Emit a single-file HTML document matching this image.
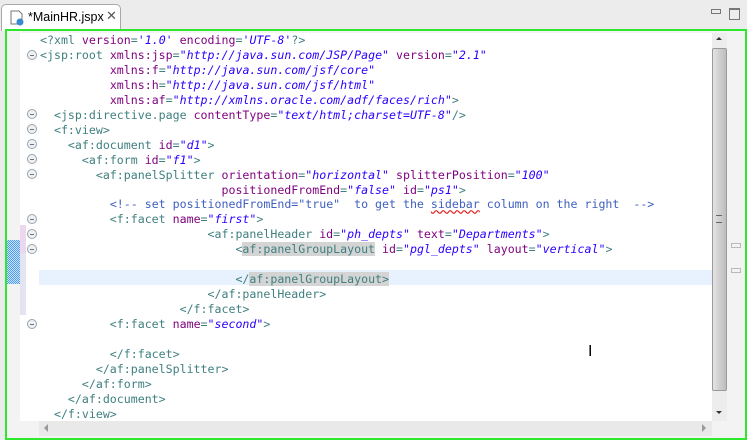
<!DOCTYPE html><html><head><meta charset="utf-8"><style>
body{margin:0;width:747px;height:440px;background:#ececec;position:relative;overflow:hidden;font-family:"Liberation Sans",sans-serif}
.tab{position:absolute;left:1px;top:4px;width:118px;height:26px;background:#fff;border:1px solid #a8a8a8;border-bottom:none;border-radius:5px 5px 0 0}
.frame{position:absolute;left:5px;top:29px;width:738px;height:407px;border:2px solid #2ee82e;background:#f3f3f3}
.code{position:absolute;left:39px;top:33px;width:673px;height:388px;background:#fff}
.margin{position:absolute;left:20px;top:33px;width:19px;height:388px;background:#fff}
pre{position:absolute;left:40px;top:33px;margin:0;font-family:"DejaVu Sans Mono",monospace;font-size:11.6px;line-height:14.95px;color:#3f7f7f}
.a{color:#7f007f}.v{color:#2a00ff;font-style:italic}.c{color:#3f5fbf}.h{background:#d4d4d4}
.fold{position:absolute;left:27px;width:8px;height:8px;border:1px solid #9aa3ad;border-radius:50%;background:#eef1f4}
.fold:after{content:"";position:absolute;left:2px;top:3.5px;width:4px;height:1px;background:#6a7480}
</style></head><body>
<div class="tab"><svg style="position:absolute;left:8px;top:5px" width="15" height="16"><path d="M1 1h8l3 3v10H1z" fill="#fff" stroke="#777"/><circle cx="10" cy="12" r="3.5" fill="#3a8ad0"/></svg><span style="position:absolute;left:26px;top:5px;font-size:12.5px;color:#000">*MainHR.jspx</span><span style="position:absolute;left:104px;top:3px;font-size:13px;color:#555">✕</span></div>
<div style="position:absolute;left:711px;top:9px;width:8px;height:3px;border:1px solid #777"></div>
<div style="position:absolute;left:729px;top:8px;width:9px;height:9px;border:1px solid #777;border-top-width:2px"></div>
<div class="frame"></div>
<div class="margin"></div>
<div style="position:absolute;left:7px;top:240px;width:13px;height:44px;background:repeating-conic-gradient(#4a9cf0 0 25%,#cfe4fb 0 50%) 0 0/2px 2px"></div>
<div style="position:absolute;left:20px;top:225px;width:6px;height:28px;background:#ecd8ee"></div>
<div style="position:absolute;left:20px;top:253px;width:6px;height:62px;background:#e4e4f0"></div>
<div class="code"></div>
<div style="position:absolute;left:39px;top:270px;width:673px;height:15px;background:#e8f2fe"></div>
<div class="fold" style="top:50px"></div><div class="fold" style="top:109px"></div><div class="fold" style="top:124px"></div><div class="fold" style="top:139px"></div><div class="fold" style="top:154px"></div><div class="fold" style="top:169px"></div><div class="fold" style="top:214px"></div><div class="fold" style="top:229px"></div><div class="fold" style="top:244px"></div><div class="fold" style="top:319px"></div>
<pre>&lt;?xml <span class="a">version</span>=<span class="v">'1.0'</span> <span class="a">encoding</span>=<span class="v">'UTF-8'</span>?&gt;
&lt;jsp:root <span class="a">xmlns:jsp</span>=<span class="v">"http://java.sun.com/JSP/Page"</span> <span class="a">version</span>=<span class="v">"2.1"</span>
          <span class="a">xmlns:f</span>=<span class="v">"http://java.sun.com/jsf/core"</span>
          <span class="a">xmlns:h</span>=<span class="v">"http://java.sun.com/jsf/html"</span>
          <span class="a">xmlns:af</span>=<span class="v">"http://xmlns.oracle.com/adf/faces/rich"</span>&gt;
  &lt;jsp:directive.page <span class="a">contentType</span>=<span class="v">"text/html;charset=UTF-8"</span>/&gt;
  &lt;f:view&gt;
    &lt;af:document <span class="a">id</span>=<span class="v">"d1"</span>&gt;
      &lt;af:form <span class="a">id</span>=<span class="v">"f1"</span>&gt;
        &lt;af:panelSplitter <span class="a">orientation</span>=<span class="v">"horizontal"</span> <span class="a">splitterPosition</span>=<span class="v">"100"</span>
                          <span class="a">positionedFromEnd</span>=<span class="v">"false"</span> <span class="a">id</span>=<span class="v">"ps1"</span>&gt;
          <span class="c">&lt;!-- set positionedFromEnd="true"  to get the <u style="text-decoration-color:#e02020;text-decoration-style:wavy">sidebar</u> column on the right  --&gt;</span>
          &lt;f:facet <span class="a">name</span>=<span class="v">"first"</span>&gt;
                        &lt;af:panelHeader <span class="a">id</span>=<span class="v">"ph_depts"</span> <span class="a">text</span>=<span class="v">"Departments"</span>&gt;
                            &lt;<span class="h">af:panelGroupLayout</span> <span class="a">id</span>=<span class="v">"pgl_depts"</span> <span class="a">layout</span>=<span class="v">"vertical"</span>&gt;

                            &lt;/<span class="h">af:panelGroupLayout</span><span class="h">&gt;</span>
                        &lt;/af:panelHeader&gt;
                    &lt;/f:facet&gt;
          &lt;f:facet <span class="a">name</span>=<span class="v">"second"</span>&gt;

          &lt;/f:facet&gt;
        &lt;/af:panelSplitter&gt;
      &lt;/af:form&gt;
    &lt;/af:document&gt;
  &lt;/f:view&gt;</pre>
<div style="position:absolute;left:39px;top:421px;width:673px;height:15px;background:#e9e9e9"></div>
<div style="position:absolute;left:44px;top:424px;width:0;height:0;border:4px solid transparent;border-right-color:#999;border-left:none"></div>
<div style="position:absolute;left:702px;top:424px;width:0;height:0;border:4px solid transparent;border-left-color:#999;border-right:none"></div>
<div style="position:absolute;left:712px;top:33px;width:15px;height:388px;background:#ededed"></div>
<div style="position:absolute;left:716px;top:37px;border:3px solid transparent;border-bottom:3px solid #333;border-top:none"></div>
<div style="position:absolute;left:716px;top:411px;border:3px solid transparent;border-top:3px solid #333;border-bottom:none"></div>
<div style="position:absolute;left:712px;top:48px;width:13px;height:341px;border:1px solid #9a9a9a;border-radius:2px;background:linear-gradient(90deg,#e4e4e4,#cfcfcf 50%,#bdbdbd)"></div>
<div style="position:absolute;left:716px;top:215px;width:6px;height:6px;border-top:1px solid #666;border-bottom:1px solid #666"></div>
<div style="position:absolute;left:731px;top:243px;width:8px;height:3px;border:1px solid #bbb"></div>
<div style="position:absolute;left:731px;top:268px;width:8px;height:3px;border:1px solid #bbb"></div>
<div style="position:absolute;left:588px;top:343px;font-size:16px;color:#000">I</div>
</body></html>
